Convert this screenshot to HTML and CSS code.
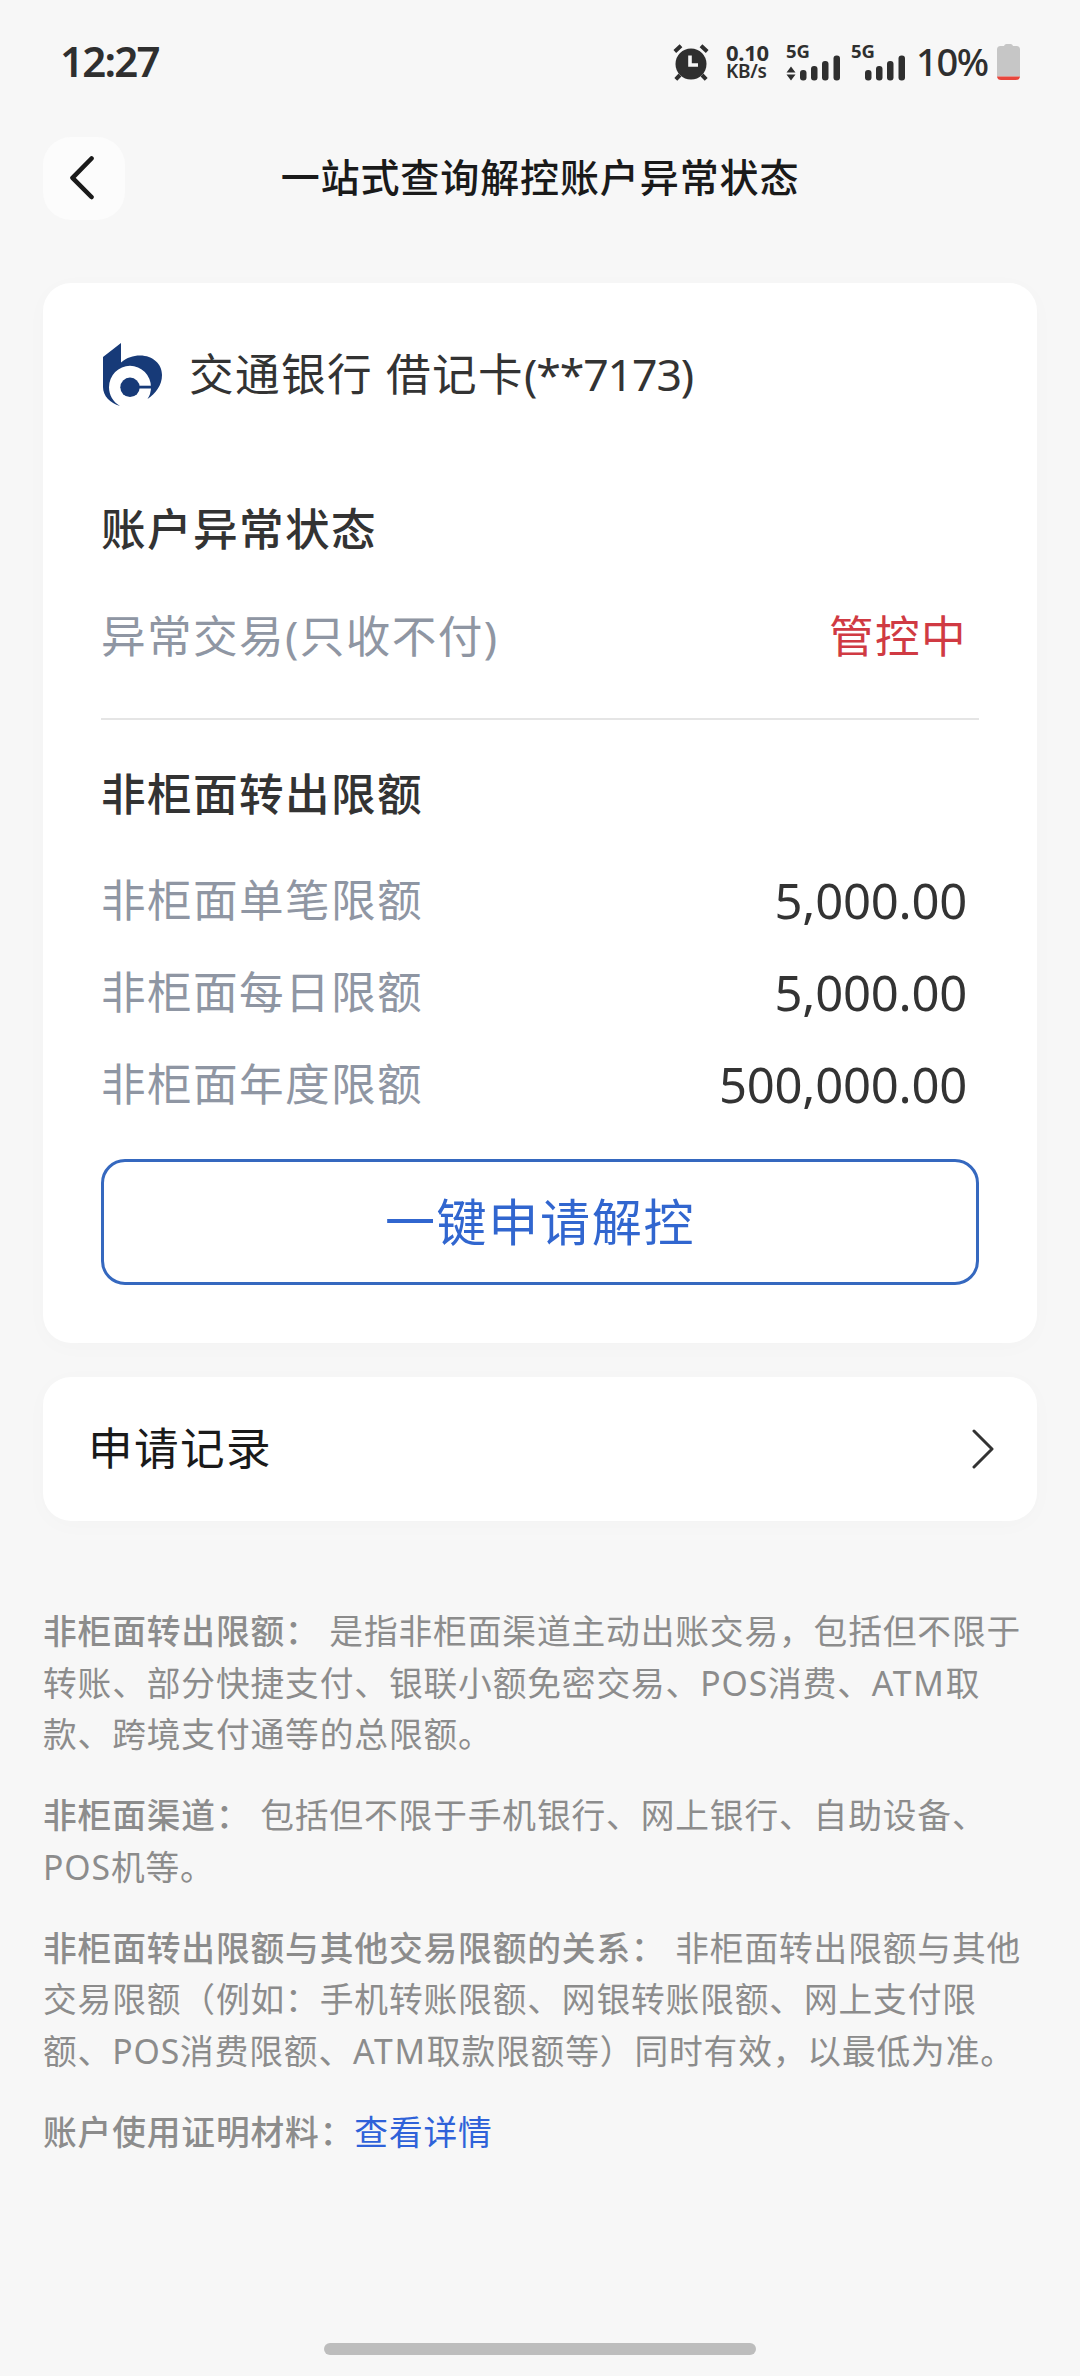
FILE: index.html
```html
<!DOCTYPE html>
<html lang="zh-CN">
<head>
<meta charset="utf-8">
<title>一站式查询解控账户异常状态</title>
<link rel="stylesheet" href="styles.css">
</head>
<body>
<div class="screen">
  <div class="status">
    <div class="time">12:27</div>
    <div class="status-icons">
      <svg class="alarm" width="36" height="37" viewBox="0 0 36 37">
        <circle cx="18" cy="20" r="15.500" fill="#2f2f2f"/>
        <path d="M1.800 7.500 8 1.800M34.200 7.500 28 1.800" stroke="#2f2f2f" stroke-width="4"/>
        <path d="M7 31 2.800 35.400M29 31l4.200 4.400" stroke="#2f2f2f" stroke-width="4"/>
        <path d="M17 11.500v9.500h8" fill="none" stroke="#f7f7f7" stroke-width="3.600"/>
      </svg>
      <div class="speed"><span>0.10</span><span class="unit">KB/s</span></div>
      <div class="signal first">
        <span class="net">5G</span>
        <svg width="56" height="37" viewBox="0 0 56 37" fill="#2f2f2f">
          <path d="M5 22.500 9.500 28.500h-9zM5 36.500.5 30.500h9z"/>
          <rect x="14" y="26" width="6.500" height="10.500" rx="3"/><rect x="25" y="22" width="6.500" height="14.500" rx="3"/><rect x="36" y="17" width="6.500" height="19.500" rx="3"/><rect x="47.500" y="11.500" width="6.500" height="25" rx="3"/>
        </svg>
      </div>
      <div class="signal second">
        <span class="net">5G</span>
        <svg width="56" height="37" viewBox="0 0 56 37" fill="#2f2f2f">
          <rect x="14" y="26" width="6.500" height="10.500" rx="3"/><rect x="25" y="22" width="6.500" height="14.500" rx="3"/><rect x="36" y="17" width="6.500" height="19.500" rx="3"/><rect x="47.500" y="11.500" width="6.500" height="25" rx="3"/>
        </svg>
      </div>
      <div class="percent">10%</div>
      <svg class="battery" width="23" height="36" viewBox="0 0 23 36">
        <path d="M7 2Q7.500 0 9.500 0h4Q15.500 0 16 2h3.500Q23 2 23 5.500V32.500H0V5.500Q0 2 3.500 2z" fill="#c6c6c6"/>
        <path d="M0 32.500h23Q22.500 36 19 36H4Q.5 36 0 32.500z" fill="#e8463c"/>
      </svg>
    </div>
  </div>

  <header class="nav">
    <div class="back">
      <svg width="26" height="44" viewBox="0 0 26 44"><path d="M22.500 2.500 3.500 21.800 22.500 41" fill="none" stroke="#1a1a1a" stroke-width="4.600" stroke-linecap="round" stroke-linejoin="round"/></svg>
    </div>
    <h1 class="title">一站式查询解控账户异常状态</h1>
  </header>

  <main>
    <section class="card account">
      <div class="bank">
        <svg class="logo" width="60" height="63" viewBox="0 0 60 63">
          <path d="M0 14 18 0V19.500C24 14.500 30 12.500 37 12.500C50 12.500 59 21 59 32C59 42 53 50 44.500 56Q48 51 48 44.300A21 21.500 0 0 0 6 44.300C6 52 10 59 17 63C7 60 0 53 0 44z" fill="#173a78"/>
          <circle cx="27" cy="44.300" r="9.700" fill="#173a78"/>
          <path d="M35 42.700H49V45.500H35z" fill="#173a78"/>
        </svg>
        <div class="bank-name">交通银行 借记卡<span class="digits">(**7173)</span></div>
      </div>
      <h2 class="heading status-heading">账户异常状态</h2>
      <div class="row state"><span>异常交易(只收不付)</span><span class="alert">管控中</span></div>
      <h2 class="heading limit-heading">非柜面转出限额</h2>
      <div class="row limit"><span>非柜面单笔限额</span><span class="amount">5,000.00</span></div>
      <div class="row limit"><span>非柜面每日限额</span><span class="amount">5,000.00</span></div>
      <div class="row limit"><span>非柜面年度限额</span><span class="amount">500,000.00</span></div>
      <div class="apply">一键申请解控</div>
    </section>

    <section class="card record">
      <span class="record-label">申请记录</span>
      <svg width="22" height="40" viewBox="0 0 22 40"><path d="M2 2 20 20 2 38" fill="none" stroke="#333" stroke-width="3" stroke-linecap="round" stroke-linejoin="round"/></svg>
    </section>

    <section class="notes">
      <p><b>非柜面转出限额：</b> 是指非柜面渠道主动出账交易，包括但不限于<br>转账、部分快捷支付、银联小额免密交易、POS消费、<span class="atm">ATM</span>取<br>款、跨境支付通等的总限额。</p>
      <p><b>非柜面渠道：</b> 包括但不限于手机银行、网上银行、自助设备、<br>POS机等。</p>
      <p><b>非柜面转出限额与其他交易限额的关系：</b> 非柜面转出限额与其他<br>交易限额（例如：手机转账限额、网银转账限额、网上支付限<br>额、POS消费限额、<span class="atm">ATM</span>取款限额等）同时有效，以最低为准。</p>
      <p><b>账户使用证明材料：</b><a class="link">查看详情</a></p>
    </section>
  </main>

  <div class="home-bar"></div>
</div>
</body>
</html>
```
FILE: styles.css
```css
* { box-sizing: border-box; }
body {
  margin: 0;
  background: #f7f7f7;
  color: #333;
  font-family: "Noto Sans", "Noto Sans CJK SC", sans-serif;
}
h1, h2, p { margin: 0; font-weight: 500; }
.screen {
  width: 1080px;
  height: 2376px;
  display: flex;
  flex-direction: column;
  overflow: hidden;
}
span, b, .title, .time { white-space: nowrap; }
svg { display: block; flex: none; }

.status {
  height: 124px;
  padding: 0 60px;
  display: flex;
  justify-content: space-between;
  align-items: center;
  color: #2f2f2f;
}
.time { font-size: 42px; font-weight: 600; letter-spacing: -1.8px; padding-bottom: 3px; }
.status-icons { display: flex; align-items: center; height: 37px; }
.speed {
  width: 44px;
  margin: 0 16px 2px 17px;
  display: flex;
  flex-direction: column;
  font-size: 22px;
  line-height: 20px;
  font-weight: 700;
  letter-spacing: -0.3px;
}
.speed .unit { font-size: 19px; line-height: 19px; font-weight: 600; }
.signal { position: relative; }
.signal.second { margin-left: 9px; }
.net {
  position: absolute;
  left: 0;
  top: -3px;
  font-size: 18.500px;
  line-height: 20px;
  font-weight: 700;
}
.percent { width: 72px; margin: 0 9px 3px 9px; font-size: 38px; line-height: 40px; font-weight: 500; letter-spacing: -1.3px; }

.nav {
  height: 159px;
  padding: 13px 43px 0;
  display: grid;
  grid-template-columns: 82px 1fr 82px;
}
.back {
  height: 83px;
  border-radius: 28px;
  background: #fcfcfc;
  display: flex;
  align-items: center;
  justify-content: center;
  padding: 0 4px 2px 0;
}
.title {
  justify-self: center;
  font-size: 39px;
  letter-spacing: 0.9px;
  line-height: 79px;
  color: #1a1a1a;
}

main { padding: 0 43px; }
.card {
  background: #fff;
  border-radius: 28px;
  box-shadow: 0 4px 24px rgba(0, 0, 0, 0.02);
}
.account {
  height: 1060px;
  padding: 51px 58px 58px;
  font-size: 44.6px;
  letter-spacing: 1.4px;
}
.bank { display: flex; align-items: center; height: 80px; }
.logo { margin: 0 26px 0 2px; }
.bank-name { line-height: 80px; color: #333; white-space: nowrap; }
.bank-name .digits { letter-spacing: -1.1px; }
.heading { font-size: 44.6px; line-height: 80px; color: #333; }
.status-heading { margin-top: 75px; }
.row {
  display: flex;
  justify-content: space-between;
  padding-right: 12px;
  color: #8f96a3;
}
.state {
  height: 151px;
  padding-top: 28px;
  border-bottom: 2px solid #e5e5e5;
  line-height: 78px;
}
.alert { color: #d03a43; }
.limit-heading { margin-top: 34px; margin-bottom: 20px; }
.limit { height: 92px; line-height: 92px; }
.amount { color: #333; font-size: 49px; letter-spacing: -0.25px; }
.apply {
  margin-top: 29px;
  height: 126px;
  border: 3px solid #3568bf;
  border-radius: 24px;
  color: #3166cf;
  font-size: 50px;
  letter-spacing: 1.7px;
  line-height: 121px;
  text-align: center;
}
.record {
  margin-top: 34px;
  height: 144px;
  padding: 0 43px 0 45px;
  display: flex;
  align-items: center;
  justify-content: space-between;
  color: #1a1a1a;
  font-size: 44.6px;
  letter-spacing: 1.4px;
}
.record-label { padding-bottom: 7px; }
.notes {
  padding-top: 85px;
  font-size: 33.7px;
  line-height: 51.7px;
  letter-spacing: 0.9px;
  color: #8c8c8c;
  white-space: nowrap;
}
.notes p { margin-bottom: 29.1px; font-weight: 400; }
.notes b { font-weight: 500; }
.notes .atm { letter-spacing: 1.8px; }
.link { color: #2f62d9; }
.home-bar {
  width: 432px;
  height: 12px;
  border-radius: 6px;
  background: #bdbdbd;
  margin: auto auto 21px;
}
```
